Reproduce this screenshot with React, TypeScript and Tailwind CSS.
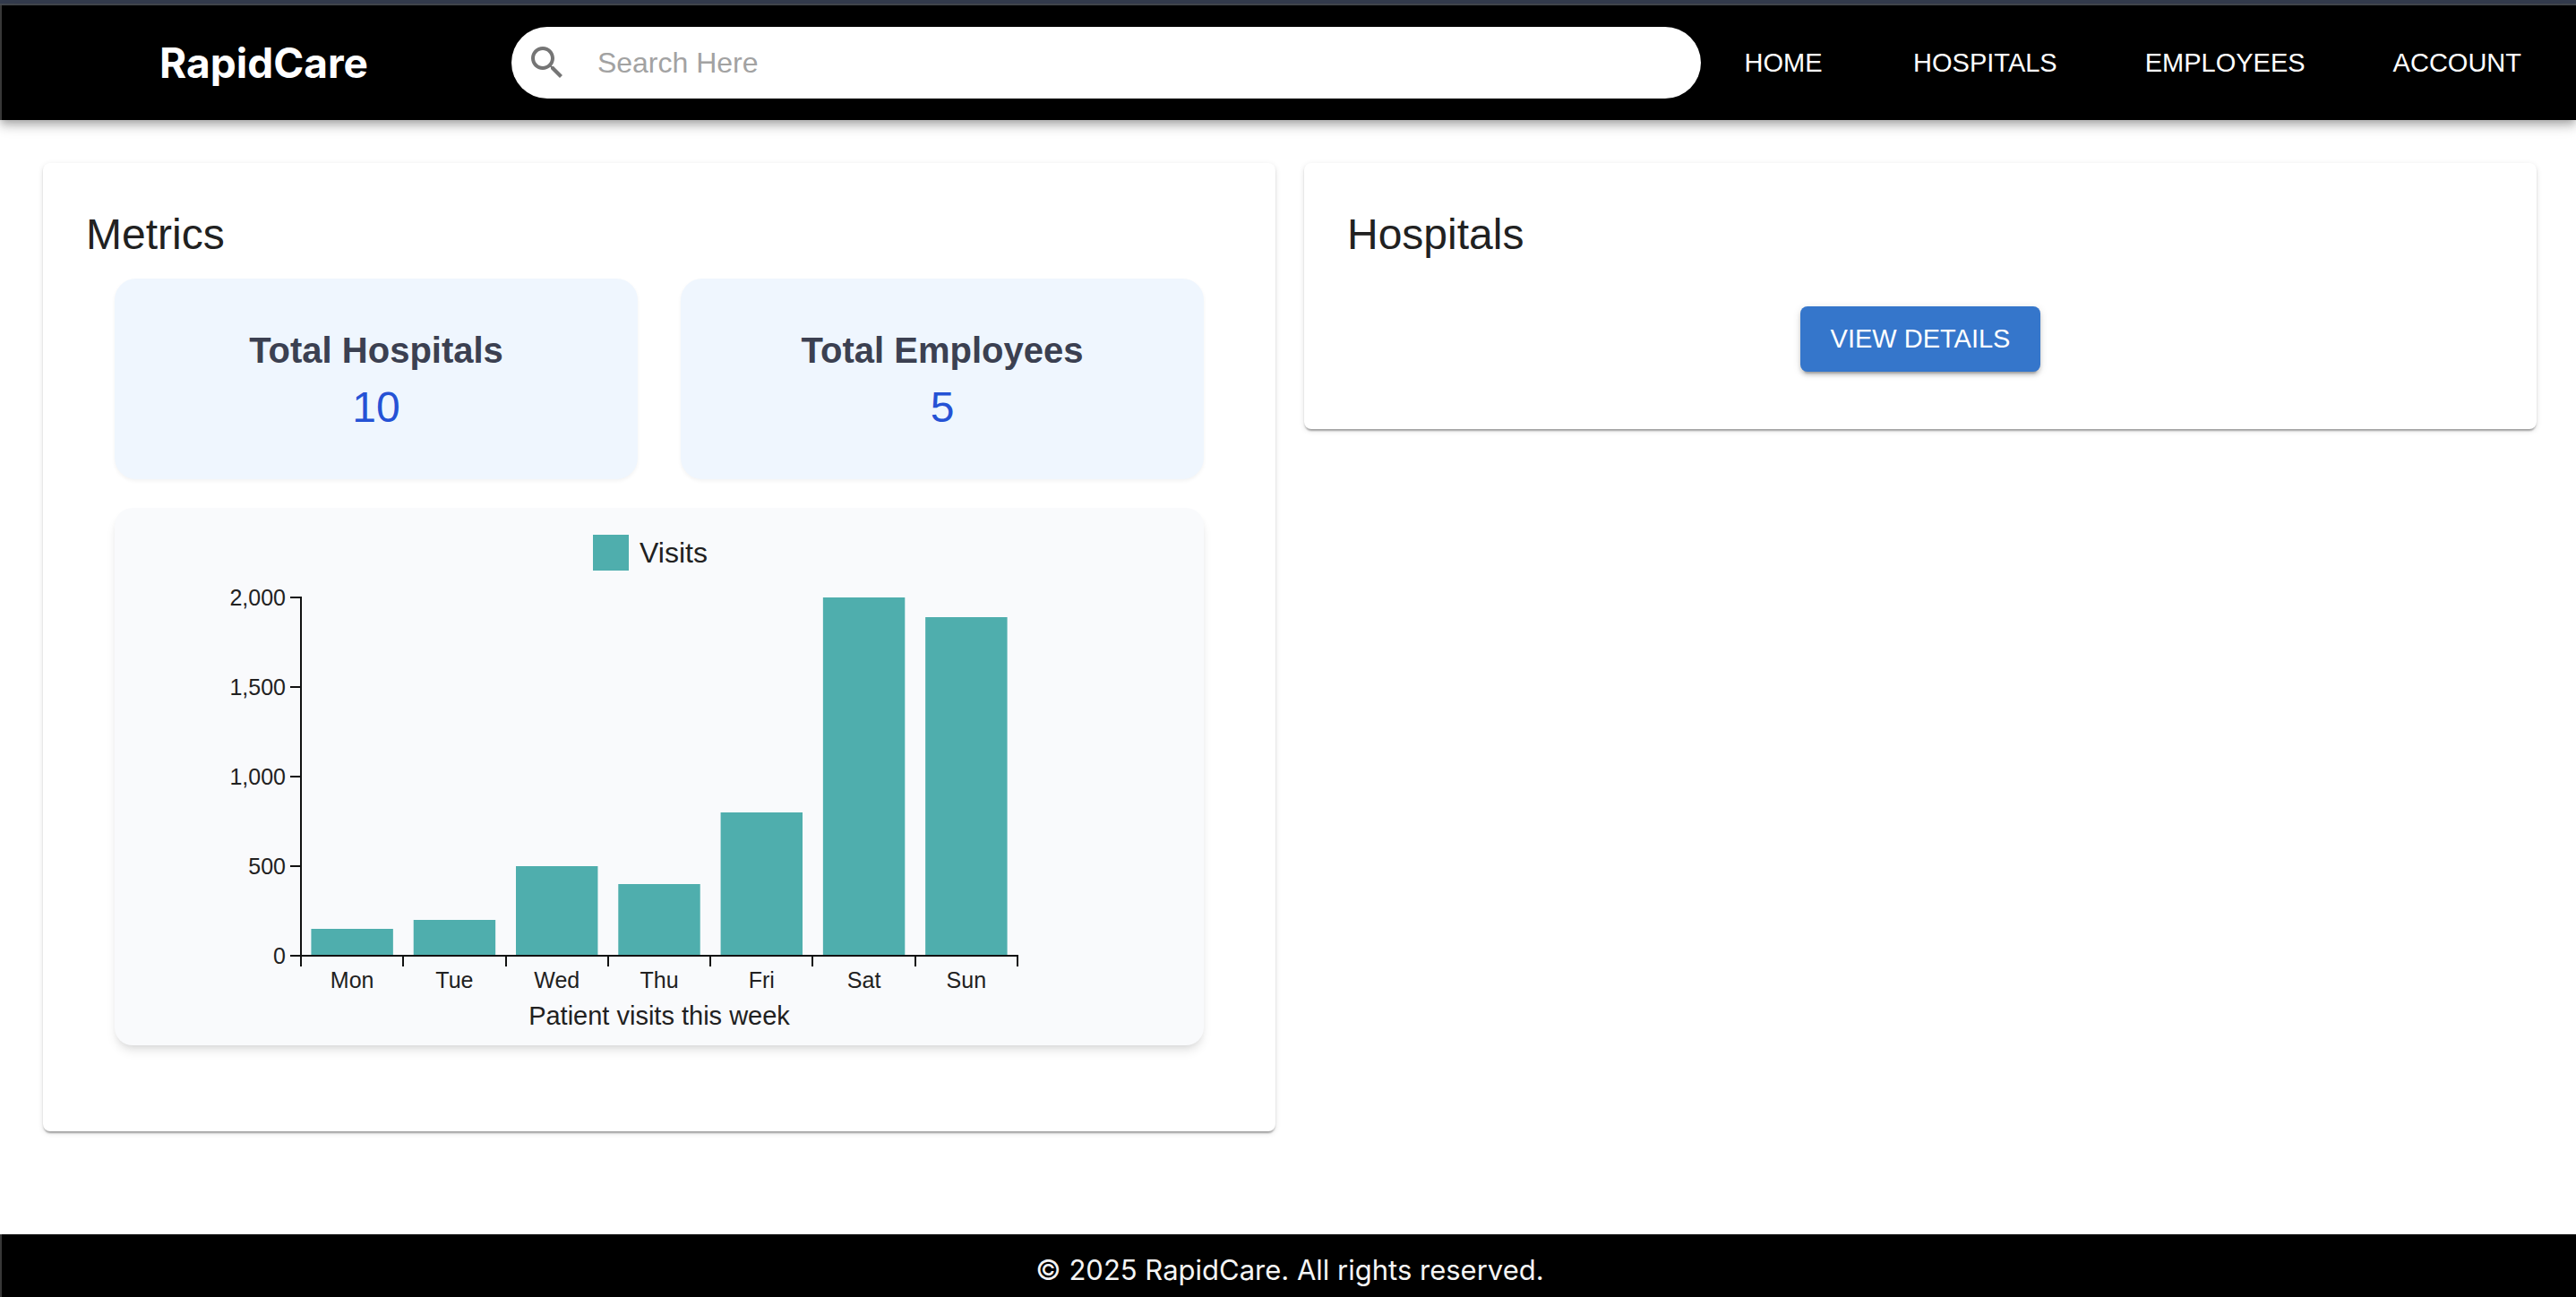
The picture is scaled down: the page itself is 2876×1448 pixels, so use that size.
import React from "react";

const NAV_ITEMS = ["HOME", "HOSPITALS", "EMPLOYEES", "ACCOUNT"];

const STATS = [
  { label: "Total Hospitals", value: "10" },
  { label: "Total Employees", value: "5" },
];

const VISITS = [
  { day: "Mon", visits: 150 },
  { day: "Tue", visits: 200 },
  { day: "Wed", visits: 500 },
  { day: "Thu", visits: 400 },
  { day: "Fri", visits: 800 },
  { day: "Sat", visits: 2000 },
  { day: "Sun", visits: 1890 },
];

const Y_TICKS = [0, 500, 1000, 1500, 2000];

const PANEL =
  "rounded-lg bg-white p-12 shadow-[0_4px_2px_-2px_rgba(0,0,0,0.2),0_2px_2px_0_rgba(0,0,0,0.14),0_2px_6px_0_rgba(0,0,0,0.12)]";

function Header() {
  return (
    <header className="relative flex items-center border-l-2 border-[#383838] bg-black py-6 pr-11 pl-44 text-white shadow-[0_4px_8px_-2px_rgba(0,0,0,0.2),0_8px_10px_0_rgba(0,0,0,0.14),0_2px_20px_0_rgba(0,0,0,0.12)]">
      <a href="#home" className="mr-40 font-[Inter,sans-serif] text-[46px] leading-[64px] font-bold">
        RapidCare
      </a>
      <label className="mr-7 flex h-20 flex-1 items-center rounded-full bg-white pl-4">
        <svg viewBox="0 0 24 24" className="size-12 shrink-0 fill-[#757575]" aria-hidden="true">
          <path d="M15.5 14h-.79l-.28-.27C15.41 12.59 16 11.11 16 9.5 16 5.91 13.09 3 9.5 3S3 5.91 3 9.5 5.91 16 9.5 16c1.61 0 3.09-.59 4.23-1.57l.27.28v.79l5 4.99L20.49 19l-4.99-5zm-6 0C7.01 14 5 11.99 5 9.5S7.01 5 9.5 5 14 7.01 14 9.5 11.99 14 9.5 14z" />
        </svg>
        <input
          type="text"
          aria-label="Search"
          placeholder="Search Here"
          className="ml-8 h-12 min-w-0 flex-1 bg-transparent text-[32px] text-[#212121] outline-none placeholder:text-[#a2a2a2]"
        />
      </label>
      <nav className="flex items-center gap-16">
        {NAV_ITEMS.map((item) => (
          <button key={item} type="button" className="min-w-32 px-[17px] text-[29px] leading-[48px]">
            {item}
          </button>
        ))}
      </nav>
    </header>
  );
}

function StatCard({ label, value }: { label: string; value: string }) {
  return (
    <div className="rounded-3xl bg-[#eff6fe] py-12 text-center shadow-[0_2px_4px_0_rgba(0,0,0,0.05)]">
      <h3 className="text-[40px] leading-[64px] font-bold text-[#3b4051]">{label}</h3>
      <p className="text-[48px] leading-[64px] text-[#2552d5]">{value}</p>
    </div>
  );
}

function VisitsChart() {
  const left = 208;
  const top = 16;
  const width = 800;
  const height = 400;
  const bottom = top + height;
  const band = width / VISITS.length;
  const bar = band * 0.8;

  return (
    <figure className="mt-8 rounded-[20px] bg-[#f9fafc] pt-[30px] shadow-[0_8px_12px_-2px_rgba(0,0,0,0.1),0_4px_8px_-4px_rgba(0,0,0,0.1)]">
      <div className="flex items-center justify-center gap-3 pr-5 text-[32px] leading-[40px]">
        <span className="size-10 bg-[#4faead]" />
        <span>Visits</span>
      </div>
      <svg
        viewBox="0 0 1216 516"
        className="mx-auto mt-[14px] block h-[516px] max-w-full fill-[#212121]"
        role="img"
        aria-label="Patient visits this week"
      >
        {VISITS.map(({ day, visits }, i) => {
          const h = (visits / 2000) * height;
          return (
            <rect
              key={day}
              x={left + i * band + (band - bar) / 2}
              y={bottom - h}
              width={bar}
              height={h}
              className="fill-[#4faead]"
            />
          );
        })}
        <g className="stroke-[#111111] stroke-2">
          <line x1={left} x2={left} y1={top - 1} y2={bottom + 12} />
          <line x1={left - 12} x2={left + width + 1} y1={bottom} y2={bottom} />
          {Y_TICKS.map((tick) => {
            const y = bottom - (tick / 2000) * height;
            return <line key={tick} x1={left - 12} x2={left} y1={y} y2={y} />;
          })}
          {VISITS.map(({ day }, i) => {
            const x = Math.round(left + (i + 1) * band);
            return <line key={day} x1={x} x2={x} y1={bottom} y2={bottom + 12} />;
          })}
        </g>
        {Y_TICKS.map((tick) => (
          <text
            key={tick}
            x={left - 17}
            y={bottom - (tick / 2000) * height + 9}
            textAnchor="end"
            className="text-[25px]"
          >
            {tick.toLocaleString("en-US")}
          </text>
        ))}
        {VISITS.map(({ day }, i) => (
          <text
            key={day}
            x={left + (i + 0.5) * band}
            y={bottom + 36}
            textAnchor="middle"
            className="text-[25px]"
          >
            {day}
          </text>
        ))}
        <text x={left + width / 2} y={bottom + 77} textAnchor="middle" className="text-[29px]">
          Patient visits this week
        </text>
      </svg>
    </figure>
  );
}

export default function App() {
  return (
    <div className="flex min-h-screen flex-col bg-white font-['Liberation_Sans',Arial,sans-serif] text-[#212121]">
      <div className="h-1.5 border-b-2 border-[#454a50] bg-[#343c4e]" />
      <Header />
      <main className="grid flex-1 grid-cols-2 items-start gap-8 pt-12 pr-11 pb-12 pl-12">
        <section className={PANEL}>
          <h2 className="text-[48px] leading-[64px]">Metrics</h2>
          <div className="mt-[17px] px-8 pb-12">
            <div className="grid grid-cols-2 gap-12">
              {STATS.map((stat) => (
                <StatCard key={stat.label} label={stat.label} value={stat.value} />
              ))}
            </div>
            <VisitsChart />
          </div>
        </section>
        <section className={PANEL}>
          <h2 className="text-[48px] leading-[64px]">Hospitals</h2>
          <div className="flex justify-center pt-12 pb-4">
            <button
              type="button"
              className="rounded-lg bg-[#3576cb] px-[34px] py-3 text-[29px] leading-[49px] text-white shadow-[0_6px_2px_-4px_rgba(0,0,0,0.2),0_4px_4px_0_rgba(0,0,0,0.14),0_2px_10px_0_rgba(0,0,0,0.12)]"
            >
              VIEW DETAILS
            </button>
          </div>
        </section>
      </main>
      <footer className="border-l-2 border-[#383838] bg-black pt-4 pb-1.5 pl-0.5 text-center font-[Inter,sans-serif] text-[31px] leading-[48px] text-[#f5f5f5]">
        © 2025 RapidCare. All rights reserved.
      </footer>
    </div>
  );
}
